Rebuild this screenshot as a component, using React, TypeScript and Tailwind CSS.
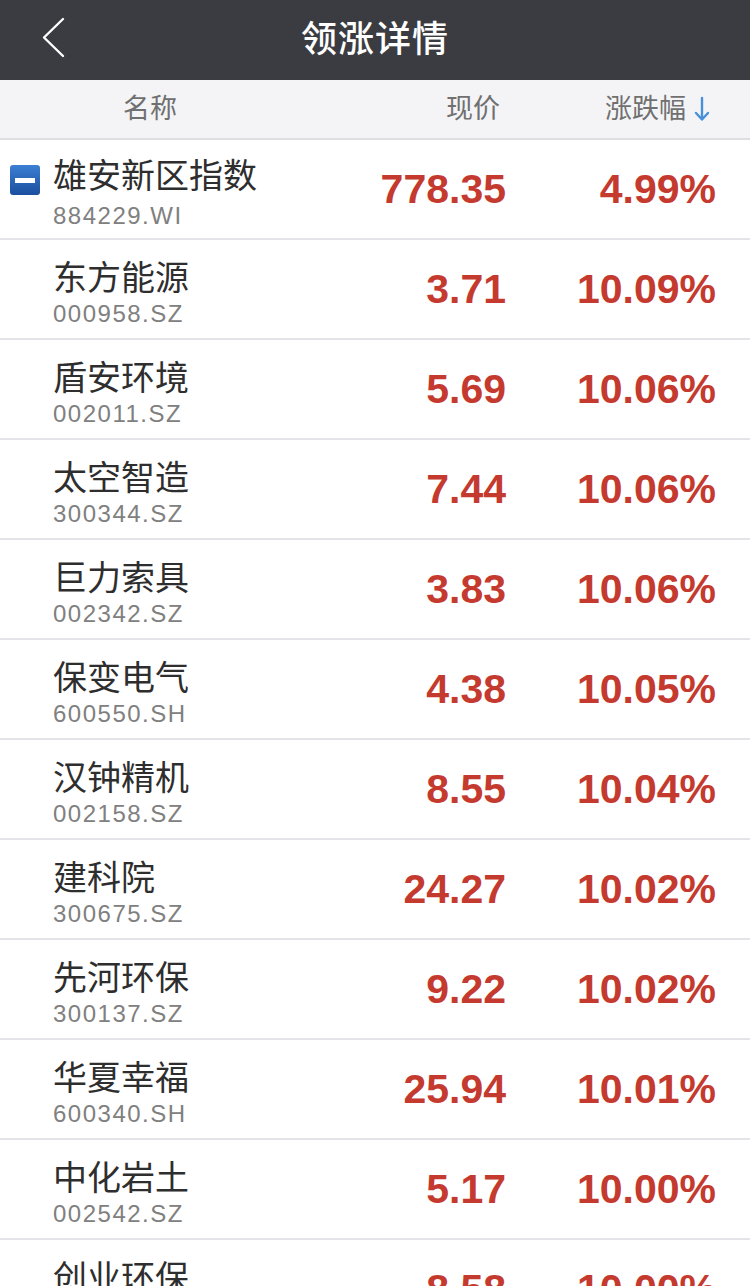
const rows = [
  { name: "雄安新区指数", code: "884229.WI", price: "778.35", pct: "4.99%", index: true },
  { name: "东方能源", code: "000958.SZ", price: "3.71", pct: "10.09%" },
  { name: "盾安环境", code: "002011.SZ", price: "5.69", pct: "10.06%" },
  { name: "太空智造", code: "300344.SZ", price: "7.44", pct: "10.06%" },
  { name: "巨力索具", code: "002342.SZ", price: "3.83", pct: "10.06%" },
  { name: "保变电气", code: "600550.SH", price: "4.38", pct: "10.05%" },
  { name: "汉钟精机", code: "002158.SZ", price: "8.55", pct: "10.04%" },
  { name: "建科院", code: "300675.SZ", price: "24.27", pct: "10.02%" },
  { name: "先河环保", code: "300137.SZ", price: "9.22", pct: "10.02%" },
  { name: "华夏幸福", code: "600340.SH", price: "25.94", pct: "10.01%" },
  { name: "中化岩土", code: "002542.SZ", price: "5.17", pct: "10.00%" },
  { name: "创业环保", code: "600874.SH", price: "8.58", pct: "10.00%" },
];

function IndexBadge() {
  return (
    <span className="absolute left-[10px] top-[25px] flex h-[30px] w-[30px] items-center justify-center rounded-[3px] bg-gradient-to-b from-[#3b7fd4] to-[#1c4f9e]">
      <span className="h-[5px] w-[20px] bg-white" />
    </span>
  );
}

function Row({ r }: { r: (typeof rows)[number] }) {
  return (
    <div className="relative flex h-[100px] shrink-0 items-center border-b-2 border-[#e4e4e8] bg-white">
      {r.index && <IndexBadge />}
      <div className="mt-[8px] flex flex-1 flex-col pl-[53px]">
        <span className="text-[34px] leading-[40px] text-[#2e2e2e]">{r.name}</span>
        <span
          className={`${r.index ? "mt-[6px]" : "mt-[2px]"} text-[24px] leading-[28px] tracking-[1.5px] text-[#808080]`}
        >
          {r.code}
        </span>
      </div>
      <div className="w-[180px] text-right text-[41px] font-bold leading-none text-[#c53a2f]">{r.price}</div>
      <div className="w-[244px] pr-[34px] text-right text-[41px] font-bold leading-none text-[#c53a2f]">{r.pct}</div>
    </div>
  );
}

export default function App() {
  return (
    <div className="flex h-[1286px] w-[750px] flex-col overflow-hidden bg-white font-['Liberation_Sans','Noto_Sans_CJK_SC',sans-serif]">
      <header className="relative flex h-[80px] shrink-0 items-center justify-center bg-[#3b3c41]">
        <svg className="absolute left-[40px] top-[17px]" width="28" height="42" viewBox="0 0 28 42" fill="none">
          <path d="M23 2 L4 20.5 L23 39" stroke="#ffffff" strokeWidth="2.4" strokeLinecap="round" strokeLinejoin="round" />
        </svg>
        <h1 className="text-[36px] font-medium tracking-[1px] text-white">领涨详情</h1>
      </header>
      <div className="flex h-[60px] shrink-0 items-center border-b-2 border-[#dedee2] bg-[#f4f4f7] text-[27px] text-[#707070]">
        <div className="flex-1 pl-[123px]">名称</div>
        <div className="w-[180px] pr-[6px] text-right">现价</div>
        <div className="flex w-[244px] items-center justify-end pr-[40px]">
          <span>涨跌幅</span>
          <svg className="ml-[8px]" width="16" height="26" viewBox="0 0 16 26" fill="none">
            <path d="M8 2 V23 M2 17 L8 23.5 L14 17" stroke="#4a90d9" strokeWidth="2.4" strokeLinecap="round" strokeLinejoin="round" />
          </svg>
        </div>
      </div>
      {rows.map((r) => (
        <Row key={r.code} r={r} />
      ))}
    </div>
  );
}
